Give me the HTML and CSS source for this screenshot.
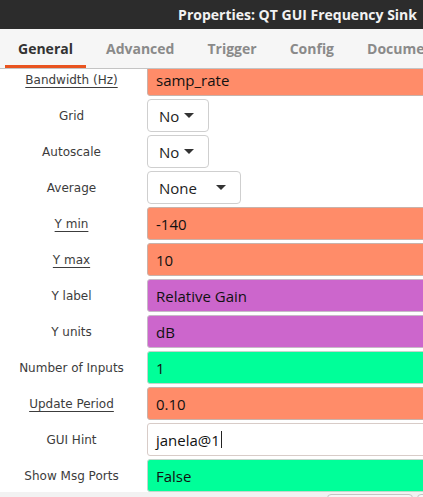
FILE: index.html
```html
<!DOCTYPE html>
<html>
<head>
<meta charset="utf-8">
<link rel="stylesheet" href="styles.css">
</head>
<body>
<div class="window">
  <header class="titlebar"><span class="title">Properties: QT GUI Frequency Sink</span></header>
  <nav class="tabs">
    <span class="tab active">General</span>
    <span class="tab">Advanced</span>
    <span class="tab">Trigger</span>
    <span class="tab">Config</span>
    <span class="tab">Documentation</span>
  </nav>
  <main class="content">
    <div class="rows">
      <div class="row"><span class="label u">Bandwidth (Hz)</span><div class="field float">samp_rate</div></div>
      <div class="row"><span class="label">Grid</span><div class="combo w-small"><span>No</span><i class="arrow"></i></div></div>
      <div class="row"><span class="label">Autoscale</span><div class="combo w-small"><span>No</span><i class="arrow"></i></div></div>
      <div class="row"><span class="label">Average</span><div class="combo w-wide"><span>None</span><i class="arrow"></i></div></div>
      <div class="row"><span class="label u">Y min</span><div class="field float">-140</div></div>
      <div class="row"><span class="label u">Y max</span><div class="field float">10</div></div>
      <div class="row"><span class="label">Y label</span><div class="field string">Relative Gain</div></div>
      <div class="row"><span class="label">Y units</span><div class="field string">dB</div></div>
      <div class="row"><span class="label">Number of Inputs</span><div class="field int">1</div></div>
      <div class="row"><span class="label u">Update Period</span><div class="field float">0.10</div></div>
      <div class="row"><span class="label">GUI Hint</span><div class="field plain">janela@1<span class="cursor"></span></div></div>
      <div class="row"><span class="label">Show Msg Ports</span><div class="field int">False</div></div>
    </div>
  </main>
  <footer class="bottom">
    <span class="btn"></span>
    <span class="btn"></span>
  </footer>
</div>
</body>
</html>
```
FILE: styles.css
```css
* { box-sizing: border-box; }
html, body { margin: 0; padding: 0; }
body {
  width: 423px;
  height: 497px;
  overflow: hidden;
  background: #ffffff;
  font-family: "Open Sans", "DejaVu Sans", sans-serif;
}
.window {
  display: flex;
  flex-direction: column;
  height: 497px;
  width: 423px;
  overflow: hidden;
}
.titlebar {
  height: 29px;
  flex: none;
  background: #2c2c2c;
  display: flex;
  align-items: center;
  justify-content: flex-end;
  padding-right: 6px;
}
.title {
  color: #f2f2f2;
  font-weight: 700;
  font-size: 14px;
  white-space: nowrap;
}
.tabs {
  height: 40px;
  flex: none;
  background: #f6f6f6;
  border-bottom: 1px solid #c4c4c4;
  display: flex;
  gap: 7px;
  padding-left: 5px;
  white-space: nowrap;
}
.tab {
  padding: 0 13px;
  display: flex;
  align-items: center;
  font-size: 14px;
  font-weight: 700;
  color: #8a8a8a;
  border-bottom: 3px solid transparent;
  padding-top: 3px;
}
.tab.active {
  color: #333333;
  border-bottom-color: #e95420;
}
.content {
  flex: 1;
  overflow: hidden;
  background: #ffffff;
}
.rows {
  margin-top: -6px;
  display: flex;
  flex-direction: column;
}
.row {
  height: 36px;
  display: grid;
  grid-template-columns: 143px 1fr;
  column-gap: 4px;
  align-items: start;
}
.label {
  height: 33px;
  display: flex;
  align-items: center;
  justify-content: center;
  font-family: "DejaVu Sans", sans-serif;
  font-size: 12px;
  color: #3c3c3c;
  white-space: nowrap;
}
.label.u { text-decoration: underline; text-underline-offset: 3px; }
.field {
  height: 33px;
  margin-right: -10px;
  border: 1px solid #c6c6c6;
  border-radius: 3px;
  display: flex;
  align-items: center;
  padding-left: 8px;
  font-size: 15px;
  color: #111111;
  white-space: nowrap;
}
.field.float { background: #ff8c69; border-color: #c9b2aa; }
.field.string { background: #cc66cc; border-color: #c7b9c7; }
.field.int { background: #00ff99; border-color: #c2d6cc; }
.field.plain { background: #ffffff; border-color: #d8ccc8; }
.cursor {
  display: inline-block;
  width: 1px;
  height: 17px;
  background: #222;
  margin-left: 1px;
}
.combo {
  height: 33px;
  border: 1px solid #cfcfcf;
  border-radius: 4px;
  background: #ffffff;
  display: flex;
  align-items: center;
  justify-content: space-between;
  padding: 0 14px 0 11px;
  font-size: 15px;
  color: #222222;
  justify-self: start;
}
.combo.w-small { width: 62px; }
.combo.w-wide { width: 94px; }
.arrow {
  width: 0;
  height: 0;
  border-left: 5px solid transparent;
  border-right: 5px solid transparent;
  border-top: 5px solid #333333;
}
.bottom {
  height: 5px;
  flex: none;
  background: #f2f2f2;
  display: flex;
  padding-left: 327px;
  gap: 4px;
  padding-top: 2px;
}
.btn {
  width: 86px;
  height: 20px;
  border: 1px solid #c4c4c4;
  border-radius: 4px;
  background: #f7f7f7;
  flex: none;
}
```
